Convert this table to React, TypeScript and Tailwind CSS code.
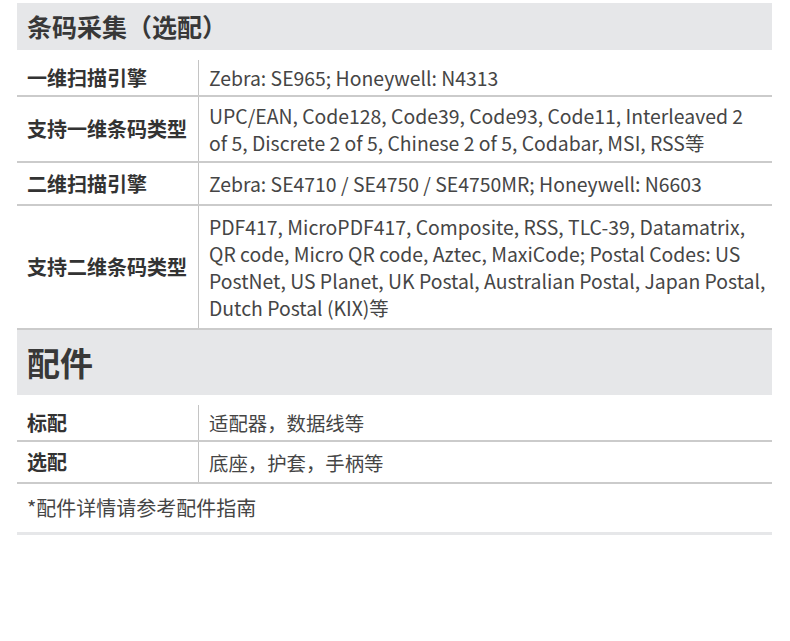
const FONT = "[font-family:'Noto_Sans_CJK_SC','Noto_Sans',sans-serif]";

type Row = { label: string; value: string; h: string };

const scanRows: Row[] = [
  { label: "一维扫描引擎", value: "Zebra: SE965; Honeywell: N4313", h: "h-[37px]" },
  {
    label: "支持一维条码类型",
    // nbsp keeps "of 5" together so the line breaks like the spec sheet
    value:
      "UPC/EAN, Code128, Code39, Code93, Code11, Interleaved 2 of\u00a05, Discrete 2 of 5, Chinese 2 of 5, Codabar, MSI, RSS等",
    h: "h-[66px]",
  },
  {
    label: "二维扫描引擎",
    value: "Zebra: SE4710 / SE4750 / SE4750MR; Honeywell: N6603",
    h: "h-[43px]",
  },
  {
    label: "支持二维条码类型",
    value:
      "PDF417, MicroPDF417, Composite, RSS, TLC-39, Datamatrix, QR code, Micro QR code, Aztec, MaxiCode; Postal Codes: US PostNet, US Planet, UK Postal, Australian Postal, Japan Postal, Dutch Postal (KIX)等",
    h: "h-[124px]",
  },
];

const accRows: Row[] = [
  { label: "标配", value: "适配器，数据线等", h: "h-[37px]" },
  { label: "选配", value: "底座，护套，手柄等", h: "h-[42px]" },
];

function SpecRow({ row }: { row: Row }) {
  return (
    <div className={`grid grid-cols-[181px_1fr] border-b-2 border-[#cbcbcb] ${row.h}`}>
      <div className="flex items-center pl-[10px] text-[20px] font-bold text-[#333]">{row.label}</div>
      <div className="flex items-center border-l border-[#c4c4c4] pl-[10px] pr-[4px] text-[19.4px] leading-[27px] text-[#454545]">
        {row.value}
      </div>
    </div>
  );
}

export default function App() {
  return (
    <div className={`min-h-screen w-full bg-white pt-[3px] ${FONT}`}>
      <div className="ml-[17px] w-[755px]">
        {/* barcode section */}
        <div className="flex h-[47px] items-center bg-[#e6e7e9] pl-[10px] text-[25px] font-bold text-[#383838]">
          条码采集（选配）
        </div>
        <div className="mt-[10px]">
          {scanRows.map((r) => (
            <SpecRow key={r.label} row={r} />
          ))}
        </div>

        {/* accessories */}
        <div className="flex h-[65px] items-center bg-[#e6e7e9] pl-[10px] text-[33px] font-bold text-[#383838]">
          配件
        </div>
        <div className="mt-[10px]">
          {accRows.map((r) => (
            <SpecRow key={r.label} row={r} />
          ))}
        </div>
        <div className="flex h-[48px] items-center pl-[10px] text-[20px] text-[#454545]">
          *配件详情请参考配件指南
        </div>
        <div className="h-[3px] bg-[#e6e7e9]" />
      </div>
    </div>
  );
}
